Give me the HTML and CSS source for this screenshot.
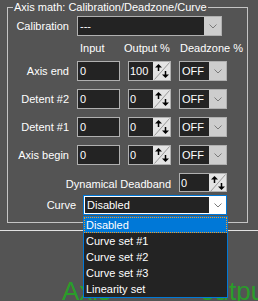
FILE: index.html
```html
<!DOCTYPE html>
<html lang="en">
<head>
    <meta charset="UTF-8">
    <title>Axis math</title>
    <link rel="stylesheet" href="styles.css">
</head>
<body>
    <fieldset class="group">
        <legend>Axis math: Calibration/Deadzone/Curve</legend>
        <div class="grid">
            <div class="label">Calibration</div>
            <div class="combo calib">
                <span class="field">---</span>
                <span class="drop"><svg width="8" height="5" viewBox="0 0 8 5"><polyline points="0.5,0.5 4,4 7.5,0.5" fill="none" stroke="#7a7a7a"/></svg></span>
            </div>

            <div class="head head-input">Input</div>
            <div class="head head-output">Output %</div>
            <div class="head head-dead">Deadzone %</div>

            <div class="label">Axis end</div>
            <div class="edit">0</div>
            <div class="spin"><span class="field">100</span><span class="arrows"><svg width="16" height="18" viewBox="0 0 16 18"><line x1="0.5" y1="17.5" x2="15.5" y2="0.5" stroke="#9a9a9a"/><polygon points="1,5.5 4.5,2 8,5.5" fill="#000"/><rect x="3.75" y="4" width="1.5" height="5" fill="#000"/><rect x="10.75" y="9" width="1.5" height="5" fill="#000"/><polygon points="8,12.5 11.5,16 15,12.5" fill="#000"/></svg></span></div>
            <div class="combo"><span class="field">OFF</span><span class="drop"><svg width="8" height="5" viewBox="0 0 8 5"><polyline points="0.5,0.5 4,4 7.5,0.5" fill="none" stroke="#7a7a7a"/></svg></span></div>

            <div class="label">Detent #2</div>
            <div class="edit">0</div>
            <div class="spin"><span class="field">0</span><span class="arrows"><svg width="16" height="18" viewBox="0 0 16 18"><line x1="0.5" y1="17.5" x2="15.5" y2="0.5" stroke="#9a9a9a"/><polygon points="1,5.5 4.5,2 8,5.5" fill="#000"/><rect x="3.75" y="4" width="1.5" height="5" fill="#000"/><rect x="10.75" y="9" width="1.5" height="5" fill="#000"/><polygon points="8,12.5 11.5,16 15,12.5" fill="#000"/></svg></span></div>
            <div class="combo"><span class="field">OFF</span><span class="drop"><svg width="8" height="5" viewBox="0 0 8 5"><polyline points="0.5,0.5 4,4 7.5,0.5" fill="none" stroke="#7a7a7a"/></svg></span></div>

            <div class="label">Detent #1</div>
            <div class="edit">0</div>
            <div class="spin"><span class="field">0</span><span class="arrows"><svg width="16" height="18" viewBox="0 0 16 18"><line x1="0.5" y1="17.5" x2="15.5" y2="0.5" stroke="#9a9a9a"/><polygon points="1,5.5 4.5,2 8,5.5" fill="#000"/><rect x="3.75" y="4" width="1.5" height="5" fill="#000"/><rect x="10.75" y="9" width="1.5" height="5" fill="#000"/><polygon points="8,12.5 11.5,16 15,12.5" fill="#000"/></svg></span></div>
            <div class="combo"><span class="field">OFF</span><span class="drop"><svg width="8" height="5" viewBox="0 0 8 5"><polyline points="0.5,0.5 4,4 7.5,0.5" fill="none" stroke="#7a7a7a"/></svg></span></div>

            <div class="label">Axis begin</div>
            <div class="edit">0</div>
            <div class="spin"><span class="field">0</span><span class="arrows"><svg width="16" height="18" viewBox="0 0 16 18"><line x1="0.5" y1="17.5" x2="15.5" y2="0.5" stroke="#9a9a9a"/><polygon points="1,5.5 4.5,2 8,5.5" fill="#000"/><rect x="3.75" y="4" width="1.5" height="5" fill="#000"/><rect x="10.75" y="9" width="1.5" height="5" fill="#000"/><polygon points="8,12.5 11.5,16 15,12.5" fill="#000"/></svg></span></div>
            <div class="combo"><span class="field">OFF</span><span class="drop"><svg width="8" height="5" viewBox="0 0 8 5"><polyline points="0.5,0.5 4,4 7.5,0.5" fill="none" stroke="#7a7a7a"/></svg></span></div>

            <div class="dyn-label">Dynamical Deadband</div>
            <div class="spin dyn"><span class="field">0</span><span class="arrows"><svg width="16" height="18" viewBox="0 0 16 18"><line x1="0.5" y1="17.5" x2="15.5" y2="0.5" stroke="#9a9a9a"/><polygon points="1,5.5 4.5,2 8,5.5" fill="#000"/><rect x="3.75" y="4" width="1.5" height="5" fill="#000"/><rect x="10.75" y="9" width="1.5" height="5" fill="#000"/><polygon points="8,12.5 11.5,16 15,12.5" fill="#000"/></svg></span></div>

            <div class="curve-row">
                <span class="curve-label">Curve</span>
                <div class="combo focused">
                    <span class="field">Disabled</span>
                    <span class="drop"><svg width="8" height="5" viewBox="0 0 8 5"><polyline points="0.5,0.5 4,4 7.5,0.5" fill="none" stroke="#7a7a7a"/></svg></span>
                    <ul class="popup">
                        <li class="selected">Disabled</li>
                        <li>Curve set #1</li>
                        <li>Curve set #2</li>
                        <li>Curve set #3</li>
                        <li>Linearity set</li>
                    </ul>
                </div>
            </div>
        </div>
    </fieldset>

    <div class="output">
        <span>Axis</span>
        <span>output</span>
    </div>
</body>
</html>
```

FILE: styles.css
```css
body {
    margin: 0;
    width: 258px;
    height: 301px;
    overflow: hidden;
    background-color: #545454;
    color: #fff;
    font-family: 'Liberation Sans', Arial, sans-serif;
    font-size: 11px;
}

.group {
    box-sizing: border-box;
    width: 241px;
    margin: 1px 0 0 7px;
    padding: 2px 0 7px 0;
    border: 1px solid #c4c4c4;
    min-inline-size: 0;
}

.group legend {
    margin-left: 5px;
    padding: 0 1px;
    line-height: 13px;
}

.grid {
    display: grid;
    grid-template-columns: 61px 43px 43px 48px;
    grid-template-rows: 26px 19px 28px 28px 28px 28px 22px 20px;
    column-gap: 8px;
    align-items: start;
}

.label {
    justify-self: end;
    line-height: 20px;
    white-space: nowrap;
}

.head {
    line-height: 13px;
    white-space: nowrap;
}

.head-input {
    grid-column: 2;
    margin-left: 3px;
}

.head-output {
    margin-left: -4px;
}

.head-dead {
    margin-left: 1px;
}

/* inputs */
.edit,
.spin,
.combo {
    box-sizing: border-box;
    height: 20px;
    border: 1px solid #b0b0b0;
    background-color: #232323;
    display: flex;
    line-height: 18px;
    white-space: nowrap;
}

.edit {
    padding-left: 2px;
}

.field {
    flex: 1;
    padding-left: 2px;
    background-color: #232323;
}

.spin .field {
    padding-left: 1px;
}

.arrows {
    width: 17px;
    background-color: #e4e4e4;
    display: flex;
    align-items: center;
    justify-content: center;
}

.arrows svg {
    display: block;
}

.drop {
    width: 17px;
    background-color: #cdcdcd;
    display: flex;
    align-items: center;
    justify-content: center;
}

.calib {
    grid-column: 2 / 5;
    width: 145px;
}

.dyn-label {
    grid-column: 1 / 4;
    justify-self: end;
    align-self: center;
    line-height: 13px;
    white-space: nowrap;
}

.dyn {
    height: 19px;
}

/* curve row */
.curve-row {
    grid-column: 1 / -1;
    display: flex;
    justify-content: flex-end;
    align-items: center;
    gap: 7px;
}

.combo.focused {
    position: relative;
    width: 144px;
    border-color: #0078d7;
    background-color: #fff;
    padding: 1px 0 1px 1px;
    line-height: 16px;
}

.combo.focused .drop {
    background-color: #fff;
}

.popup {
    position: absolute;
    left: -1px;
    top: 20px;
    width: 145px;
    box-sizing: border-box;
    margin: 0;
    padding: 0;
    list-style: none;
    border: 1px solid #0078d7;
    background-color: #232323;
}

.popup li {
    height: 16px;
    line-height: 16px;
    padding-left: 2px;
}

.popup .selected {
    background-color: #0078d7;
    outline: 1px dotted #f59a23;
    outline-offset: -1px;
}

/* bottom area */
.output {
    margin-top: 7px;
    border-top: 1px solid #e2e2e2;
    padding: 47px 0 0 62px;
    display: flex;
    gap: 89px;
    color: #2a9d2a;
    font-size: 26px;
    line-height: 26px;
    white-space: nowrap;
}
```
